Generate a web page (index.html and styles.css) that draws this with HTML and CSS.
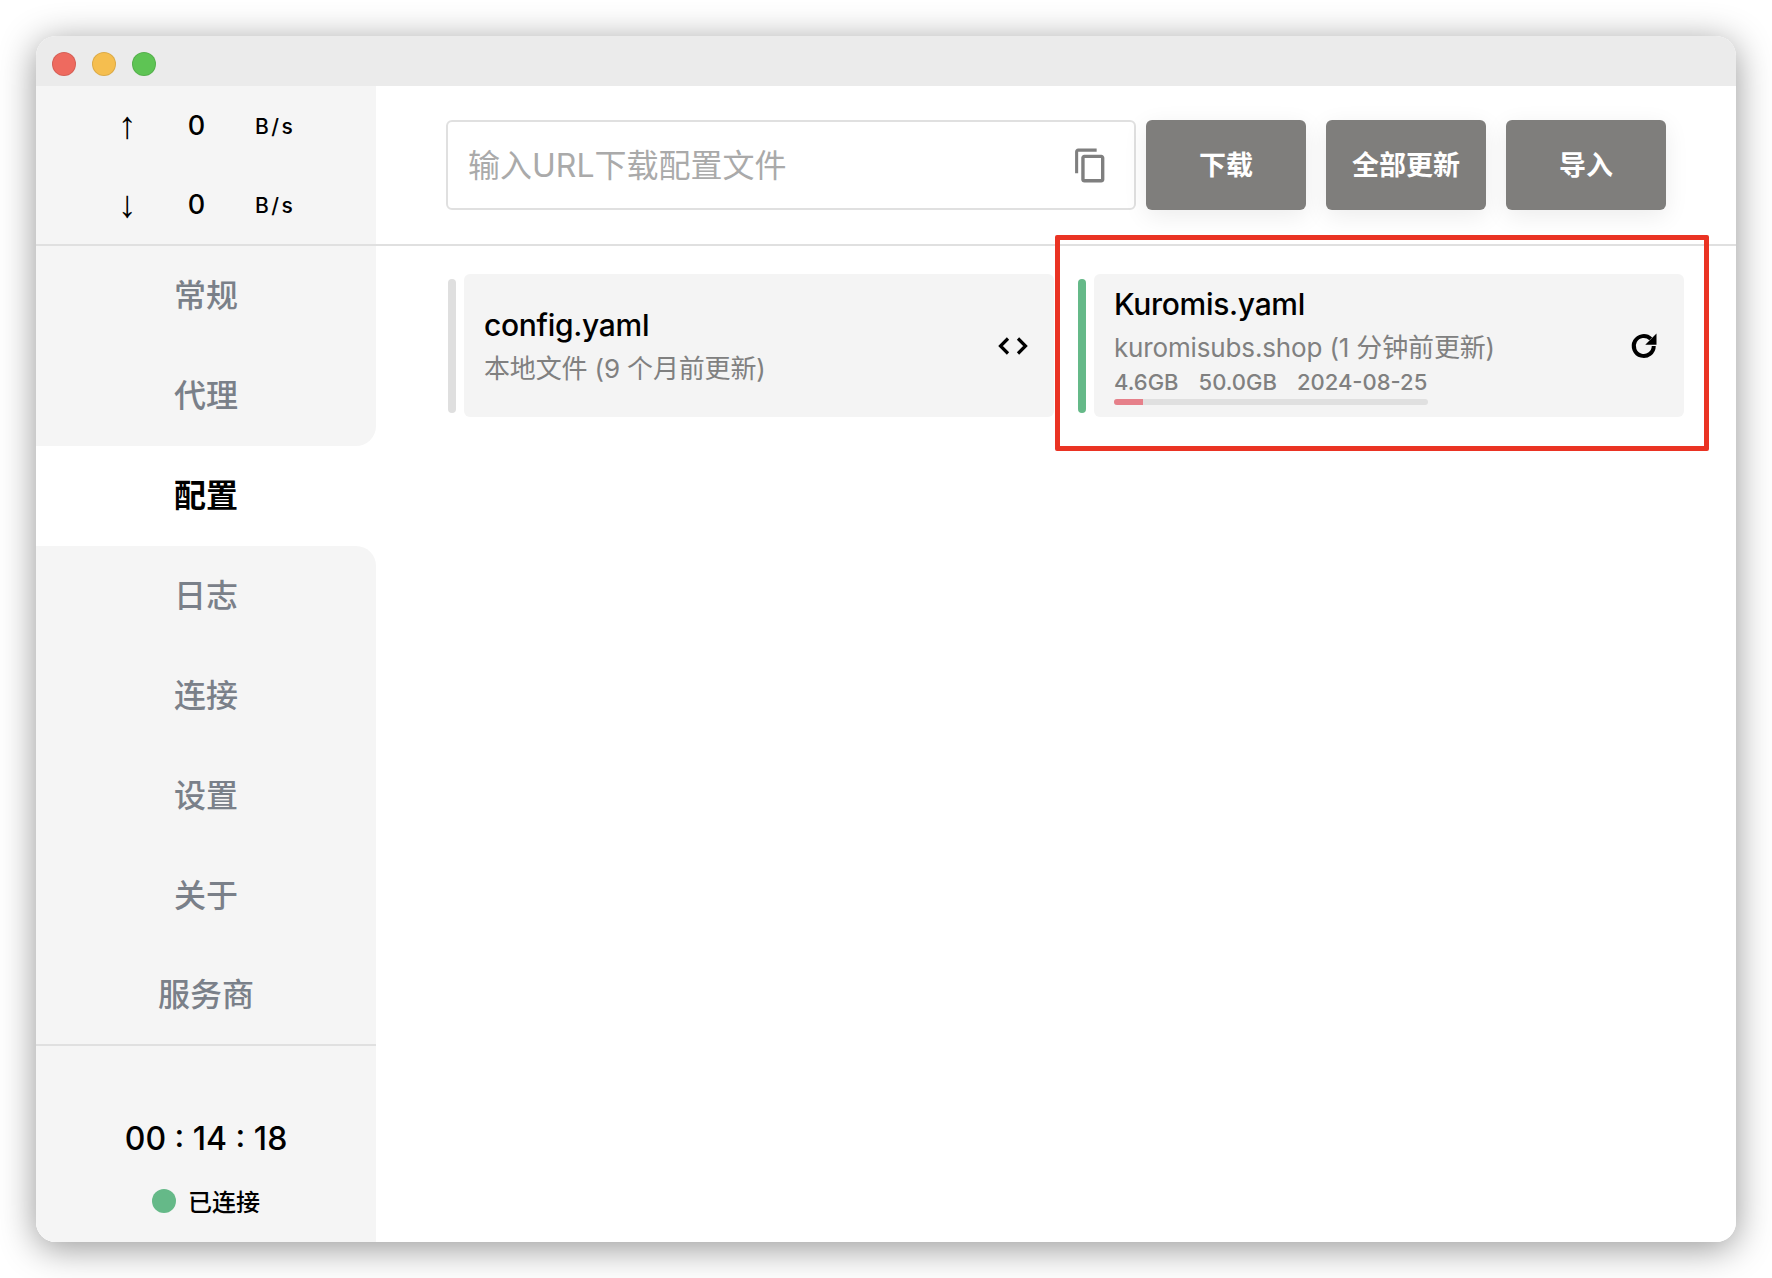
FILE: index.html
```html
<!DOCTYPE html>
<html lang="zh">
<head>
  <meta charset="UTF-8" />
  <title>Clash</title>
  <link rel="stylesheet" href="styles.css">
</head>
<body>
  <div class="window">
    <div class="titlebar">
      <span class="light red"></span>
      <span class="light yellow"></span>
      <span class="light green"></span>
    </div>
    <div class="main">
      <aside class="sidebar">
        <div class="traffic">
          <div class="traffic-row"><span class="arrow">↑</span><span class="speed">0</span><span class="unit">B/s</span></div>
          <div class="traffic-row"><span class="arrow">↓</span><span class="speed">0</span><span class="unit">B/s</span></div>
        </div>
        <nav class="nav">
          <div class="nav-item">常规</div>
          <div class="nav-item before-active">代理</div>
          <div class="nav-item active">配置</div>
          <div class="nav-item after-active">日志</div>
          <div class="nav-item">连接</div>
          <div class="nav-item">设置</div>
          <div class="nav-item">关于</div>
          <div class="nav-item">服务商</div>
        </nav>
        <div class="status">
          <div class="clock">00 : 14 : 18</div>
          <div class="connected"><span class="dot"></span>已连接</div>
        </div>
      </aside>
      <section class="content">
        <div class="toolbar">
          <div class="url-box">
            <span class="placeholder">输入URL下载配置文件</span>
            <svg class="copy-icon" viewBox="0 0 24 24" width="37" height="37"><path fill="#7f7f7f" d="M16 1H4c-1.100 0-2 .9-2 2v14h2V3h12V1zm3 4H8c-1.100 0-2 .9-2 2v14c0 1.100.9 2 2 2h11c1.100 0 2-.9 2-2V7c0-1.100-.9-2-2-2zm-.2 15.800H8.200V7.200h10.600v13.600z"/></svg>
          </div>
          <button class="btn">下载</button>
          <button class="btn">全部更新</button>
          <button class="btn">导入</button>
        </div>
        <div class="profiles">
          <div class="profile">
            <div class="bar"></div>
            <div class="card">
              <div class="info">
                <div class="name">config.yaml</div>
                <div class="sub">本地文件 (9 个月前更新)</div>
              </div>
              <svg class="code-icon" viewBox="0 0 32 20" width="32" height="20"><path fill="none" stroke="#000" stroke-width="3.200" d="M11 2.500 3.500 10l7.500 7.500M21 2.500l7.500 7.500-7.500 7.500"/></svg>
            </div>
          </div>
          <div class="profile">
            <div class="bar on"></div>
            <div class="card">
              <div class="info">
                <div class="name">Kuromis.yaml</div>
                <div class="sub">kuromisubs.shop (1 分钟前更新)</div>
                <div class="usage"><span>4.6GB</span><span>50.0GB</span><span>2024-08-25</span></div>
                <div class="progress"><div class="progress-fill" style="width: 9.2%"></div></div>
              </div>
              <svg class="refresh-icon" viewBox="0 0 24 24" width="30" height="30"><path fill="none" stroke="#000" stroke-width="3.200" d="M19.800 12a8 8 0 1 1-2.400-5.700"/><path d="M22 2v9h-9z"/></svg>
            </div>
          </div>
        </div>
        <div class="highlight"></div>
      </section>
    </div>
  </div>
</body>
</html>
```
FILE: styles.css
```css
* {
  box-sizing: border-box;
}

body {
  margin: 0;
  width: 1772px;
  height: 1278px;
  padding: 36px;
  background: #fff;
  overflow: hidden;
  font-family: Inter, "Noto Sans CJK SC", sans-serif;
}

.window {
  width: 1700px;
  height: 1206px;
  border-radius: 20px;
  overflow: hidden;
  display: flex;
  flex-direction: column;
  background: #fff;
  box-shadow: 0 6px 36px rgba(0, 0, 0, 0.42);
}

.titlebar {
  height: 50px;
  flex-shrink: 0;
  background: #ebebeb;
  display: flex;
  align-items: center;
  gap: 16px;
  padding: 6px 16px 0;
}

.light {
  width: 24px;
  height: 24px;
  border-radius: 50%;
  border: 1px solid rgba(0, 0, 0, 0.1);
}

.red { background: #ee6a5f; }
.yellow { background: #f5be4f; }
.green { background: #5ec454; }

.main {
  flex: 1;
  display: flex;
  min-height: 0;
}

/* barra lateral */
.sidebar {
  width: 340px;
  flex-shrink: 0;
  display: flex;
  flex-direction: column;
  background: #fff;
}

.traffic {
  height: 160px;
  padding-top: 1px;
  background: #f5f5f5;
  border-bottom: 2px solid #e0e0e0;
}

.traffic-row {
  height: 79px;
  display: grid;
  grid-template-columns: 68px 70px 1fr;
  align-items: center;
  padding-left: 57px;
  color: #000;
}

.arrow {
  font-size: 38px;
  line-height: 1;
  text-align: center;
  margin-bottom: 4px;
  font-family: "Liberation Sans", sans-serif;
}

.speed {
  font-size: 27px;
  font-weight: 500;
  text-align: center;
  margin: 0 0 3px 1px;
}

.unit {
  font-size: 21px;
  font-weight: 500;
  letter-spacing: 2.500px;
  padding-left: 24px;
}

.nav {
  height: 800px;
  display: flex;
  flex-direction: column;
}

.nav-item {
  height: 100px;
  flex-shrink: 0;
  display: flex;
  align-items: center;
  justify-content: center;
  padding-bottom: 6px;
  background: #f5f5f5;
  font-size: 32px;
  font-weight: 500;
  color: #7a8089;
}

.nav-item:last-child {
  border-bottom: 2px solid #e0e0e0;
}

.nav-item.active {
  background: #fff;
  color: #000;
  font-weight: 700;
}

.before-active { border-bottom-right-radius: 20px; }
.after-active { border-top-right-radius: 20px; }

.status {
  flex: 1;
  display: flex;
  flex-direction: column;
  align-items: center;
  padding-top: 73px;
  background: #f5f5f5;
}

.clock {
  font-size: 32px;
  font-weight: 500;
  color: #000;
}

.connected {
  margin-top: 25px;
  display: flex;
  align-items: center;
  gap: 12px;
  font-size: 24px;
  font-weight: 500;
  color: #000;
}

.dot {
  width: 24px;
  height: 24px;
  border-radius: 50%;
  background: #65b988;
}

/* contenido */
.content {
  flex: 1;
  position: relative;
  background: #fff;
}

.toolbar {
  height: 160px;
  display: flex;
  align-items: flex-start;
  padding: 34px 0 0 70px;
  border-bottom: 2px solid #e0e0e0;
}

.url-box {
  width: 690px;
  height: 90px;
  margin-right: 10px;
  display: flex;
  align-items: center;
  justify-content: space-between;
  padding: 0 25px 0 20px;
  border: 2px solid #e0e0e0;
  border-radius: 6px;
}

.placeholder {
  font-size: 32px;
  color: #aaa;
  margin-bottom: 4px;
}

.btn {
  width: 160px;
  height: 90px;
  margin-right: 20px;
  padding: 0 0 4px;
  border: none;
  border-radius: 6px;
  background: #7f7e7c;
  color: #fff;
  font-family: inherit;
  font-size: 27px;
  font-weight: 700;
  box-shadow: 0 6px 24px rgba(0, 0, 0, 0.08);
}

.profiles {
  display: grid;
  grid-template-columns: 606px 606px;
  gap: 24px;
  padding: 28px 0 0 72px;
}

.profile {
  display: flex;
  gap: 8px;
  height: 143px;
  align-items: center;
}

.bar {
  width: 8px;
  height: 134px;
  border-radius: 4px;
  background: #dfdfdf;
}

.bar.on { background: #65b988; }

.card {
  flex: 1;
  height: 143px;
  display: flex;
  align-items: center;
  justify-content: space-between;
  padding: 0 25px 0 20px;
  background: #f4f4f4;
  border-radius: 6px;
}

.name {
  font-size: 30px;
  font-weight: 500;
  letter-spacing: -0.3px;
  color: #000;
}

.sub {
  margin-top: 5px;
  font-size: 26px;
  letter-spacing: -0.15px;
  color: #808080;
}

.usage {
  display: flex;
  gap: 20px;
  margin-top: 5px;
  font-size: 22px;
  font-weight: 500;
  color: #808080;
}

.progress {
  width: 314px;
  height: 6px;
  margin-top: 4px;
  border-radius: 3px;
  background: #e0e0e0;
  overflow: hidden;
}

.progress-fill {
  height: 100%;
  background: #e6808a;
}

.highlight {
  position: absolute;
  left: 679px;
  top: 149px;
  width: 654px;
  height: 216px;
  border: 5px solid #ea3323;
  border-radius: 2px;
}
```
